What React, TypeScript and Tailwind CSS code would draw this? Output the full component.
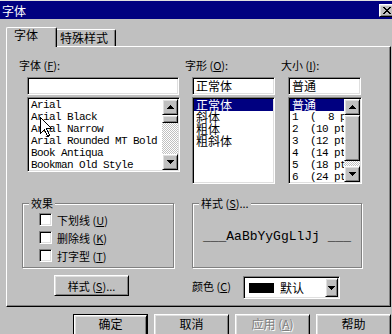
import React from "react";

const CJK = "font-['Noto_Sans_CJK_SC','Noto_Sans_CJK_JP',sans-serif]";
const MONO = "font-['Liberation_Mono',monospace]";

const raised =
  "border border-t-white border-l-white border-r-black border-b-black shadow-[inset_1px_1px_0_#dfdfdf,inset_-1px_-1px_0_#808080] bg-[#c0c0c0]";
const sunken =
  "border border-t-[#808080] border-l-[#808080] border-r-white border-b-white shadow-[inset_1px_1px_0_#000,inset_-1px_-1px_0_#dfdfdf]";
const etched = "border border-[#808080] shadow-[inset_1px_1px_0_#fff,1px_1px_0_#fff]";
const checker =
  "bg-[image:repeating-conic-gradient(#c0c0c0_0%_25%,#ffffff_0%_50%)] bg-[length:2px_2px]";

function Arrow({ up }: { up?: boolean }) {
  return (
    <svg width="7" height="4" viewBox="0 0 7 4" shapeRendering="crispEdges">
      <path
        d={
          up
            ? "M3 0h1v1h1v1h1v1h1v1H0V3h1V2h1V1h1z"
            : "M0 0h7v1H6v1H5v1H4v1H3V3H2V2H1V1H0z"
        }
        fill="#000"
      />
    </svg>
  );
}

function ScrollBar({ thumb }: { thumb: string }) {
  return (
    <div className="flex flex-col w-[16px] h-full shrink-0">
      <div className={`${raised} h-[16px] flex items-center justify-center`}>
        <Arrow up />
      </div>
      <div className={`${raised} ${thumb}`} />
      <div className={`flex-1 ${checker}`} />
      <div className={`${raised} h-[16px] flex items-center justify-center`}>
        <Arrow />
      </div>
    </div>
  );
}

function Label({ text, k, tail = ":" }: { text: string; k: string; tail?: string }) {
  return (
    <div className="h-[14px] leading-[14px] text-[11px] whitespace-nowrap">
      {text} (<span className="underline">{k}</span>){tail}
    </div>
  );
}

function Check({ text, k }: { text: string; k: string }) {
  return (
    <div className="flex items-center h-[13px]">
      <div className={`${sunken} bg-white w-[13px] h-[13px]`} />
      <span className="ml-[5px] text-[11px] leading-[14px] whitespace-nowrap">
        {text} (<span className="underline">{k}</span>)
      </span>
    </div>
  );
}

const fonts = [
  "Arial",
  "Arial Black",
  "Arial Narrow",
  "Arial Rounded MT Bold",
  "Book Antiqua",
  "Bookman Old Style",
];
const styles = ["正常体", "斜体", "粗体", "粗斜体"];
const sizes = ["1  (  8 pt)", "2  (10 pt)", "3  (12 pt)", "4  (14 pt)", "5  (18 pt)", "6  (24 pt)"];

export default function App() {
  return (
    <div className={`relative w-[392px] h-[334px] overflow-hidden bg-[#c0c0c0] text-black ${CJK}`}>
      <div className="h-px bg-[#dfdfdf]" />
      {/* title bar */}
      <div className="h-[18px] bg-[#000080] flex items-start justify-between">
        <span className="ml-[2px] mt-[3px] text-white text-[12px] leading-[14px]">字体</span>
        <div className={`${raised} w-[16px] h-[13px] mt-[3px] mr-[-3px] flex items-center justify-center`}>
          <svg width="8" height="7" viewBox="0 0 8 7" shapeRendering="crispEdges">
            <path d="M0 0h2l2 2.5L6 0h2L5 3.5 8 7H6L4 4.5 2 7H0l3-3.5z" fill="#000" />
          </svg>
        </div>
      </div>

      {/* tabs */}
      <div className="mt-[8px] ml-[6px] flex items-end h-[19px]">
        <div className="relative z-10 h-[20px] -mb-px w-[51px] bg-[#c0c0c0] border-t border-l border-r border-t-white border-l-white border-r-black rounded-t-[2px] shadow-[inset_-1px_0_0_#808080] pl-[7px] text-[12px] leading-[14px]">
          字体
        </div>
        <div className="h-[17px] w-[59px] border-t border-r border-t-white border-r-black rounded-tr-[2px] shadow-[inset_-1px_0_0_#808080] pl-[3px] pt-[1px] text-[12px] leading-[14px] whitespace-nowrap">
          特殊样式
        </div>
      </div>

      {/* panel */}
      <div className="ml-[6px] w-[385px] h-[261px] border border-t-white border-l-white border-r-black border-b-black shadow-[inset_-1px_-1px_0_#808080]">
        <div className="flex mt-[11px] ml-[12px]">
          <div className="w-[166px]">
            <Label text="字体" k="F" />
            <div className={`${sunken} bg-white ml-[8px] mt-[5px] w-[152px] h-[18px]`} />
            <div className={`${sunken} bg-white ml-[8px] mt-[2px] w-[153px] h-[75px] p-px flex`}>
              <div className="flex-1 pl-[2px] overflow-hidden">
                {fonts.map((f) => (
                  <div key={f} className={`${MONO} text-[11px] tracking-[-0.6px] h-[12px] leading-[12px] whitespace-pre`}>
                    {f}
                  </div>
                ))}
              </div>
              <ScrollBar thumb="h-[8px]" />
            </div>
          </div>
          <div className="w-[96px]">
            <Label text="字形" k="O" />
            <div className={`${sunken} bg-white ml-[7px] mt-[5px] w-[83px] h-[18px] p-px pl-[3px] text-[12px] leading-[14px]`}>
              正常体
            </div>
            <div className={`${sunken} bg-white ml-[7px] mt-[2px] w-[83px] h-[87px] p-px overflow-hidden`}>
              {styles.map((s, i) => (
                <div
                  key={s}
                  className={`h-[12px] leading-[12px] text-[12px] pl-[2px] ${i === 0 ? "bg-[#000080] text-white" : ""}`}
                >
                  {s}
                </div>
              ))}
            </div>
          </div>
          <div className="w-[90px]">
            <Label text="大小" k="I" />
            <div className={`${sunken} bg-white ml-[7px] mt-[5px] w-[73px] h-[18px] p-px pl-[3px] text-[12px] leading-[14px]`}>
              普通
            </div>
            <div className={`${sunken} bg-white ml-[7px] mt-[2px] w-[74px] h-[87px] p-px flex`}>
              <div className="flex-1 overflow-hidden">
                <div className="h-[12px] leading-[12px] text-[12px] pl-[2px] bg-[#000080] text-white">普通</div>
                {sizes.map((s) => (
                  <div key={s} className={`${MONO} text-[11px] tracking-[-0.6px] h-[12px] leading-[12px] pl-[2px] whitespace-pre`}>
                    {s}
                  </div>
                ))}
              </div>
              <ScrollBar thumb="h-[46px]" />
            </div>
          </div>
        </div>

        {/* group boxes */}
        <div className="flex mt-[19px] ml-[15px] gap-[18px]">
          <div className={`relative ${etched} w-[152px] h-[65px] pl-[16px] pt-[9px] flex flex-col gap-[5px]`}>
            <span className="absolute -top-[8px] left-[6px] px-[2px] bg-[#c0c0c0] text-[11px] leading-[14px]">效果</span>
            <Check text="下划线" k="U" />
            <Check text="删除线" k="K" />
            <Check text="打字型" k="T" />
          </div>
          <div className={`relative ${etched} w-[170px] h-[65px] flex items-center justify-center`}>
            <span className="absolute -top-[8px] left-[6px] px-[2px] bg-[#c0c0c0] text-[11px] leading-[14px] whitespace-nowrap">
              样式 (<span className="underline">S</span>)...
            </span>
            <span className={`${MONO} text-[13px] whitespace-pre mt-[2px]`}>___AaBbYyGgLlJj ___</span>
          </div>
        </div>

        {/* style button + colour */}
        <div className="flex items-start mt-[7px] ml-[47px]">
          <div className={`${raised} w-[75px] h-[21px] flex items-center justify-center text-[11px] leading-[14px] whitespace-nowrap`}>
            样式 (<span className="underline">S</span>)...
          </div>
          <div className="ml-[63px] w-[51px] mt-[4px] text-[11px] leading-[14px] whitespace-nowrap">
            颜色 (<span className="underline">C</span>)
          </div>
          <div className={`${sunken} bg-white w-[97px] h-[23px] mt-px p-px flex items-center`}>
            <div className="w-[25px] h-[10px] bg-black ml-[4px]" />
            <span className="ml-[6px] text-[12px] leading-[14px]">默认</span>
            <div className={`${raised} ml-auto w-[13px] h-full flex items-center justify-center`}>
              <Arrow />
            </div>
          </div>
        </div>
      </div>

      {/* dialog buttons */}
      <div className="mt-[7px] ml-[73px] flex gap-[6px] text-[12px] leading-[14px]">
        <div className="w-[75px] h-[23px] border border-black">
          <div className={`${raised} w-full h-full flex items-center justify-center pb-[3px]`}>确定</div>
        </div>
        <div className={`${raised} w-[75px] h-[23px] flex items-center justify-center pb-[3px]`}>取消</div>
        <div className={`${raised} w-[75px] h-[23px] flex items-center justify-center pb-[3px] text-[#808080] [text-shadow:1px_1px_0_#fff]`}>
          应用 (<span className="underline">A</span>)
        </div>
        <div className={`${raised} w-[75px] h-[23px] flex items-center justify-center pb-[3px]`}>帮助</div>
      </div>

      {/* mouse pointer */}
      <svg className="absolute left-[40px] top-[117px]" width="13" height="20" viewBox="0 0 13 20" shapeRendering="crispEdges">
        <path d="M0.5 0.5V16.5L4.5 12.5L7.5 19.5L9.5 18.5L6.5 11.5H11.5Z" fill="#fff" stroke="#000" />
      </svg>
    </div>
  );
}
